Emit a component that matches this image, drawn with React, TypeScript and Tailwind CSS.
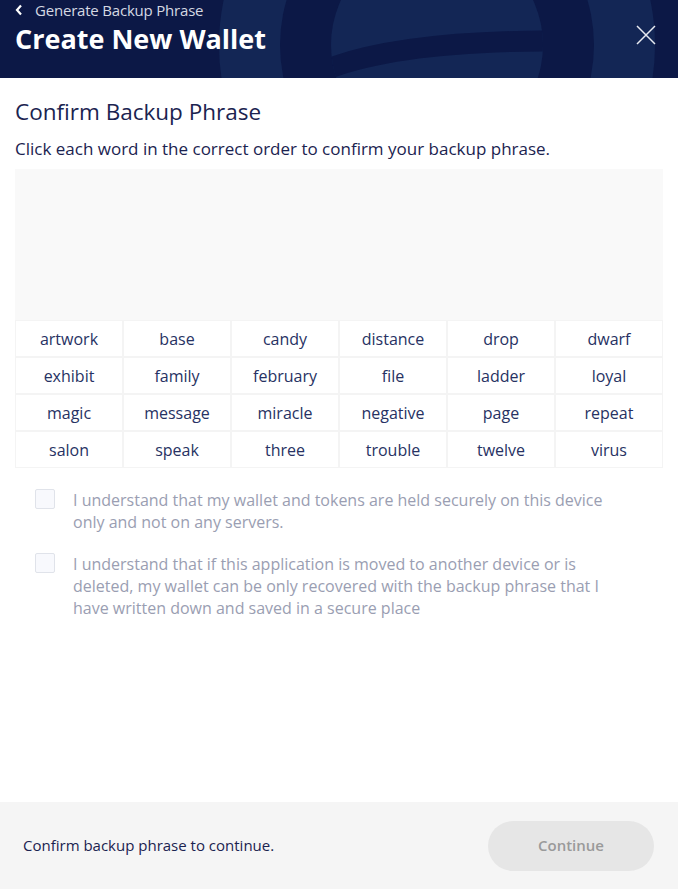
import React, { useState } from "react";

const WORDS = [
  "artwork", "base", "candy", "distance", "drop", "dwarf",
  "exhibit", "family", "february", "file", "ladder", "loyal",
  "magic", "message", "miracle", "negative", "page", "repeat",
  "salon", "speak", "three", "trouble", "twelve", "virus",
];

function HeaderArt() {
  return (
    <svg className="absolute inset-0" width="678" height="78" viewBox="0 0 678 78">
      <defs>
        <clipPath id="inner">
          <circle cx="437" cy="45" r="106" />
        </clipPath>
      </defs>
      <circle cx="437" cy="45" r="218" fill="#132655" />
      <circle cx="437" cy="45" r="157" fill="#0c1846" />
      <circle cx="437" cy="45" r="106" fill="#132655" />
      <g clipPath="url(#inner)">
        <path d="M 285 92 Q 350 40 560 41" stroke="#0c1846" strokeWidth="21" fill="none" />
      </g>
    </svg>
  );
}

export default function App() {
  const [checks, setChecks] = useState([false, false]);
  const [picked, setPicked] = useState<string[]>([]);

  const toggle = (i: number) =>
    setChecks((prev) => prev.map((c, j) => (j === i ? !c : c)));

  return (
    <div
      className="flex h-[889px] w-[678px] flex-col bg-white"
      style={{ fontFamily: "'Open Sans', 'Liberation Sans', sans-serif" }}
    >
      {/* Header */}
      <div className="relative h-[78px] shrink-0 overflow-hidden bg-[#0c1846]">
        <HeaderArt />
        <div className="relative flex items-start justify-between px-[15px]">
          <div>
            <div className="mt-[2px] flex h-[16px] items-center gap-[12px] text-[15px] leading-[16px] text-[#d5d8e2]">
              <svg width="8" height="12" viewBox="0 0 8 12">
                <path d="M6 1.5 L2 6 L6 10.5" stroke="#ffffff" strokeWidth="2.2" fill="none" />
              </svg>
              <span className="tracking-[-0.2px]">Generate Backup Phrase</span>
            </div>
            <h1 className="mt-[4px] text-[27px] font-bold leading-[34px] text-white">
              Create New Wallet
            </h1>
          </div>
          <button className="mr-[7px] mt-[25px]">
            <svg width="20" height="20" viewBox="0 0 20 20">
              <path d="M1 1 L19 19 M19 1 L1 19" stroke="#e8eaf0" strokeWidth="1.5" />
            </svg>
          </button>
        </div>
      </div>

      {/* Body */}
      <div className="flex-1 px-[15px]">
        <h2 className="mt-[20px] text-[22.5px] leading-[28px] text-[#1b2350]">
          Confirm Backup Phrase
        </h2>
        <p className="mt-[12px] text-[17px] leading-[22px] text-[#1b2350]">
          Click each word in the correct order to confirm your backup phrase.
        </p>

        <div className="mt-[9px] flex h-[151px] flex-wrap content-start gap-2 bg-[#f9f9f9] p-2">
          {picked.map((w) => (
            <span key={w} className="rounded bg-white px-3 py-1 text-[15px] text-[#273263]">
              {w}
            </span>
          ))}
        </div>

        <div className="grid grid-cols-6 gap-[2px] bg-[#f4f4f4] p-[1px]">
          {WORDS.map((w) => (
            <button
              key={w}
              onClick={() =>
                setPicked((p) => (p.includes(w) ? p.filter((x) => x !== w) : [...p, w]))
              }
              className="h-[35px] bg-white pt-[1px] text-[16px] text-[#273263]"
            >
              {w}
            </button>
          ))}
        </div>

        <div className="mt-[21px] flex flex-col gap-[20px] pl-[20px] pr-[30px]">
          {[
            "I understand that my wallet and tokens are held securely on this device only and not on any servers.",
            "I understand that if this application is moved to another device or is deleted, my wallet can be only recovered with the backup phrase that I have written down and saved in a secure place",
          ].map((t, i) => (
            <label key={i} className="flex items-start gap-[18px]">
              <span
                onClick={() => toggle(i)}
                className="h-[20px] w-[20px] shrink-0 rounded-[2px] border border-[#e0e3ea] bg-[#f8f9fd]"
              >
                {checks[i] && (
                  <svg width="18" height="18" viewBox="0 0 18 18">
                    <path d="M4 9 L7.5 12.5 L14 5.5" stroke="#1b2350" strokeWidth="2" fill="none" />
                  </svg>
                )}
              </span>
              <span className="text-[16px] leading-[22px] text-[#9a9eb2]">{t}</span>
            </label>
          ))}
        </div>
      </div>

      {/* Footer */}
      <div className="flex h-[87px] shrink-0 items-center justify-between bg-[#f5f5f5] pl-[23px] pr-[24px]">
        <span className="text-[15px] text-[#1b2350]">Confirm backup phrase to continue.</span>
        <button
          disabled
          className="h-[50px] w-[166px] rounded-full bg-[#e6e6e6] text-[15px] font-semibold text-[#9a9a9a]"
        >
          Continue
        </button>
      </div>
    </div>
  );
}
